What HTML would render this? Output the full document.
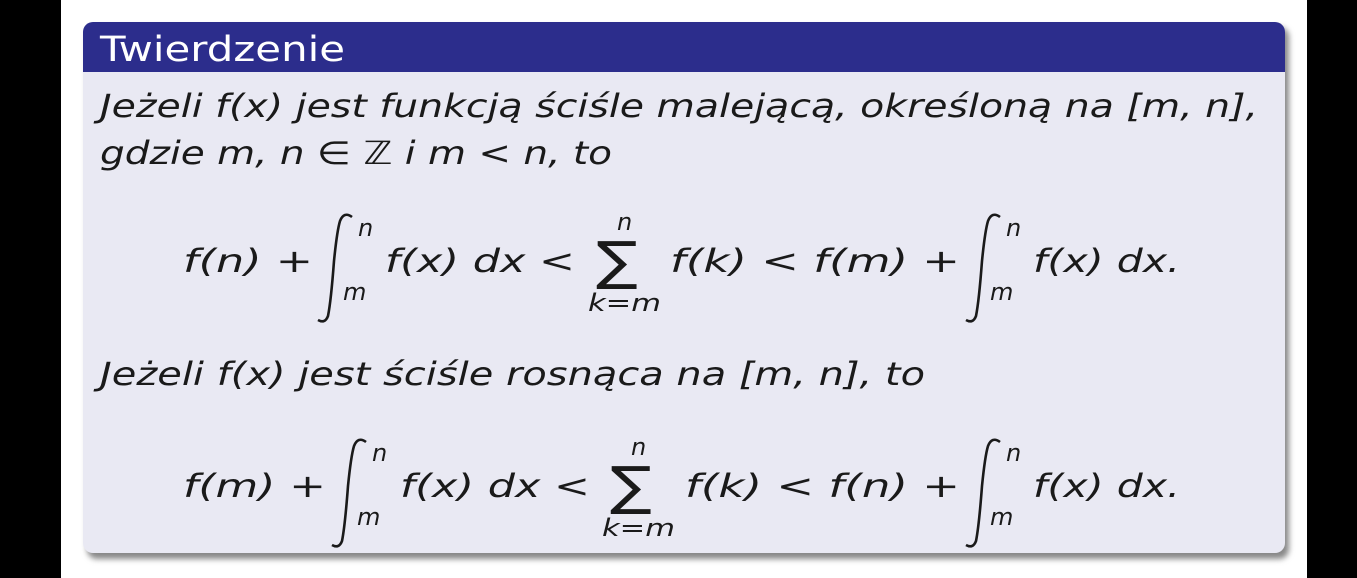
<!DOCTYPE html>
<html><head><meta charset="utf-8"><style>
html,body{margin:0;padding:0;background:#000;}
svg{display:block}
text{font-family:"DejaVu Sans","Liberation Sans",sans-serif;fill:#1a1a1a}
.i{font-style:italic}
</style></head><body>
<svg width="1357" height="578" viewBox="0 0 1357 578" xmlns="http://www.w3.org/2000/svg">
<defs>
<filter id="sh" x="-5%" y="-5%" width="110%" height="115%"><feGaussianBlur stdDeviation="3"/></filter>
</defs>
<rect x="0" y="0" width="1357" height="578" fill="#000"/>
<rect x="61" y="0" width="1246" height="578" fill="#fff"/>
<rect x="87" y="27" width="1202" height="532" rx="10" fill="#888" filter="url(#sh)"/>
<rect x="83" y="22" width="1202" height="531" rx="10" fill="#e9e9f3"/>
<path d="M83 72 V32 a10 10 0 0 1 10 -10 H1275 a10 10 0 0 1 10 10 V72 Z" fill="#2c2d8c"/>
<text x="100" y="61" font-size="35" style="fill:#fff" textLength="245" lengthAdjust="spacingAndGlyphs">Twierdzenie</text>

<text class="i" x="100" y="117" font-size="32" textLength="1158" lengthAdjust="spacingAndGlyphs">Jeżeli f(x) jest funkcją ściśle malejącą, określoną na [m, n],</text>
<text class="i" x="100" y="164" font-size="32" textLength="512" lengthAdjust="spacingAndGlyphs">gdzie m, n ∈ ℤ i m &lt; n, to</text>

<!-- formula 1 -->
<g font-size="32">
<text class="i" x="183" y="272" textLength="130" lengthAdjust="spacingAndGlyphs">f(n) +</text>
<path d="M352 220 q-8 -6 -12 4 q-3 10 -6 40 q-3 40 -6 55 q-3 8 -10 4" stroke="#1a1a1a" stroke-width="2.6" fill="none" transform="translate(0,-3)"/>
<text class="i" x="358" y="236" font-size="24">n</text>
<text class="i" x="343" y="300" font-size="24">m</text>
<text class="i" x="385" y="272" textLength="190" lengthAdjust="spacingAndGlyphs">f(x) dx &lt;</text>
<text x="596" y="280" font-size="62" transform="scale(1,0.85) translate(0,48)">∑</text>
<text class="i" x="617" y="230" font-size="24">n</text>
<text class="i" x="588" y="311" font-size="24" textLength="73" lengthAdjust="spacingAndGlyphs">k=m</text>
<text class="i" x="670" y="272" textLength="290" lengthAdjust="spacingAndGlyphs">f(k) &lt; f(m) +</text>
<path d="M1000 220 q-8 -6 -12 4 q-3 10 -6 40 q-3 40 -6 55 q-3 8 -10 4" stroke="#1a1a1a" stroke-width="2.6" fill="none" transform="translate(0,-3)"/>
<text class="i" x="1006" y="236" font-size="24">n</text>
<text class="i" x="990" y="300" font-size="24">m</text>
<text class="i" x="1033" y="272" textLength="147" lengthAdjust="spacingAndGlyphs">f(x) dx.</text>
</g>

<text class="i" x="100" y="385" font-size="32" textLength="825" lengthAdjust="spacingAndGlyphs">Jeżeli f(x) jest ściśle rosnąca na [m, n], to</text>

<!-- formula 2 -->
<g font-size="32">
<text class="i" x="183" y="497" textLength="143" lengthAdjust="spacingAndGlyphs">f(m) +</text>
<path d="M366 445 q-8 -6 -12 4 q-3 10 -6 40 q-3 40 -6 55 q-3 8 -10 4" stroke="#1a1a1a" stroke-width="2.6" fill="none" transform="translate(0,-3)"/>
<text class="i" x="372" y="461" font-size="24">n</text>
<text class="i" x="357" y="525" font-size="24">m</text>
<text class="i" x="400" y="497" textLength="190" lengthAdjust="spacingAndGlyphs">f(x) dx &lt;</text>
<text x="610" y="505" font-size="62" transform="scale(1,0.85) translate(0,88)">∑</text>
<text class="i" x="631" y="455" font-size="24">n</text>
<text class="i" x="602" y="536" font-size="24" textLength="73" lengthAdjust="spacingAndGlyphs">k=m</text>
<text class="i" x="685" y="497" textLength="275" lengthAdjust="spacingAndGlyphs">f(k) &lt; f(n) +</text>
<path d="M1000 445 q-8 -6 -12 4 q-3 10 -6 40 q-3 40 -6 55 q-3 8 -10 4" stroke="#1a1a1a" stroke-width="2.6" fill="none" transform="translate(0,-3)"/>
<text class="i" x="1006" y="461" font-size="24">n</text>
<text class="i" x="990" y="525" font-size="24">m</text>
<text class="i" x="1033" y="497" textLength="147" lengthAdjust="spacingAndGlyphs">f(x) dx.</text>
</g>
</svg>
</body></html>
